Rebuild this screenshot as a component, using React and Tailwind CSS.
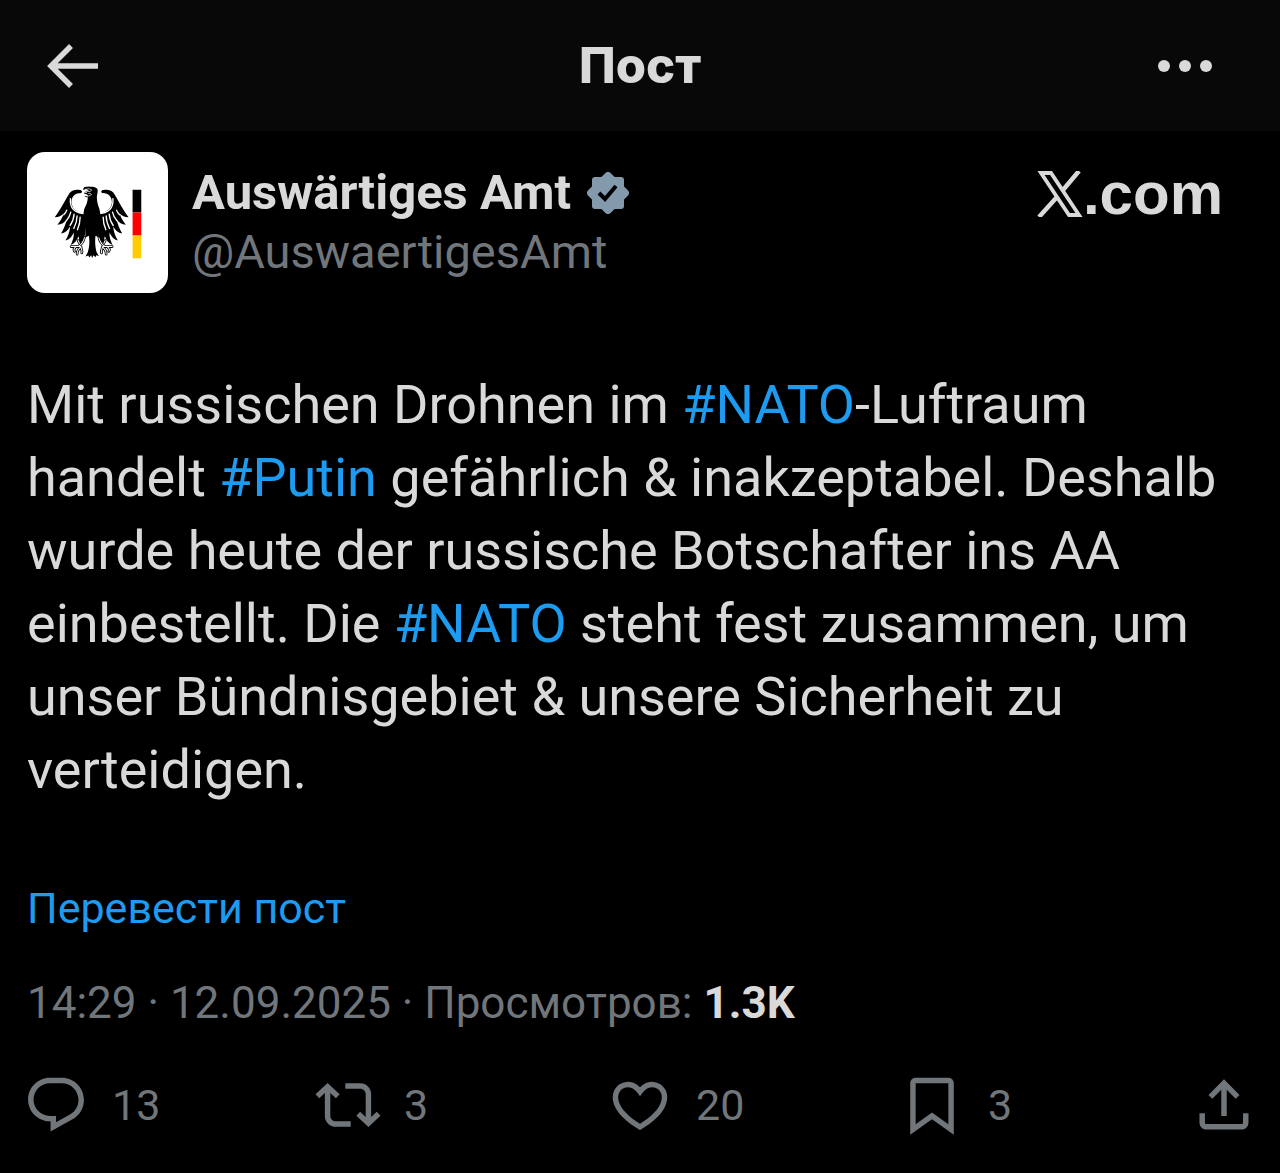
// outlines of the action bar icons, all drawn on a 24 unit grid
const ICONS = {
    reply: 'M1.751 10c0-4.42 3.584-8 8.005-8h4.366c4.49 0 8.129 3.64 8.129 8.13 0 2.96-1.607 5.68-4.196 7.11l-8.054 4.46v-3.69h-.067c-4.49.1-8.183-3.51-8.183-8.01zm8.005-6c-3.317 0-6.005 2.69-6.005 6 0 3.37 2.77 6.08 6.138 6.01l.351-.01h1.761v2.3l5.087-2.81c1.951-1.08 3.163-3.13 3.163-5.36 0-3.39-2.744-6.13-6.129-6.13H9.756z',
    repost: 'M4.5 3.88l4.432 4.14-1.364 1.46L5.5 7.55V16c0 1.1.896 2 2 2H13v2H7.5c-2.209 0-4-1.79-4-4V7.55L1.432 9.48.068 8.02 4.5 3.88zM16.5 6H11V4h5.5c2.209 0 4 1.79 4 4v8.45l2.068-1.93 1.364 1.46-4.432 4.14-4.432-4.14 1.364-1.46 2.068 1.93V8c0-1.1-.896-2-2-2z',
    like: 'M16.697 5.5c-1.222-.06-2.679.51-3.89 2.16l-.805 1.09-.806-1.09C9.984 6.01 8.526 5.44 7.304 5.5c-1.243.07-2.349.78-2.91 1.91-.552 1.12-.633 2.78.479 4.82 1.074 1.97 3.257 4.27 7.129 6.61 3.87-2.34 6.052-4.64 7.126-6.61 1.111-2.04 1.03-3.7.477-4.82-.561-1.13-1.666-1.84-2.908-1.91zm4.187 7.69c-1.351 2.48-4.001 5.12-8.379 7.67l-.503.3-.504-.3c-4.379-2.55-7.029-5.19-8.382-7.67-1.36-2.5-1.41-4.86-.514-6.67.887-1.79 2.647-2.91 4.601-3.01 1.651-.09 3.368.56 4.798 2.01 1.429-1.45 3.146-2.1 4.796-2.01 1.954.1 3.714 1.22 4.601 3.01.896 1.81.846 4.17-.514 6.67z',
    bookmark: 'M4 4C4 2.9 4.9 2 6 2h12c1.1 0 2 .9 2 2v18.94l-8-5.71-8 5.71V4zM6 4v15.06l6-4.29 6 4.29V4H6z',
    share: 'M12 2.59l5.7 5.7-1.41 1.42L13 6.41V16h-2V6.41l-3.3 3.3-1.41-1.42L12 2.59zM21 15l-.02 3.51c0 1.38-1.12 2.49-2.5 2.49H5.5C4.11 21 3 19.88 3 18.5V15h2v3.5c0 .28.22.5.5.5h12.98c.28 0 .5-.22.5-.5L19 15h2z',
};

const ACTIONS = [
    { icon: 'reply', label: 'Ответить', count: '13' },
    { icon: 'repost', label: 'Репост', count: '3' },
    { icon: 'like', label: 'Нравится', count: '20' },
    { icon: 'bookmark', label: 'Закладка', count: '3' },
    { icon: 'share', label: 'Поделиться' },
];

// claw of the eagle, stroked twice to get a white shape with a black outline
const CLAW = 'M193 276c-3 12-9 20-17 26m-23 1h28m-13 0c-6 4-8 9-5 14m20-13c-9 6-12 14-12 22m12-19c2 5 3 10 2 15M178 293l-4-8';

// one half of the eagle: wing, feathers and claw. The other half is mirrored.
function EagleHalf() {
    return (
        <>
            <path d="M180 134c-10-3-24-1-31 8-12 18-24 45-45 73 12 0 20-4 27-11-4 12-10 23-19 34 12-1 21-7 28-17-3 15-9 29-17 43 12-2 21-10 27-21-1 15-6 29-14 42 12-3 20-12 25-24 1 13-3 25-9 37 12-4 19-14 23-26 3 8 2 16 2 24 8-6 15-18 19-32l4-60c-22 2-43-10-46-31-1-14 6-26 18-29 6-1 11 0 13-3s0-6-5-7z" />
            <path d="M151 158c-3 30 12 45 46 47" fill="none" stroke="#fff" strokeWidth="4" />
            <path d="M140 194c-2 6-5 10-9 14M152 200c-2 10-7 19-14 27M162 206c-1 13-5 24-12 34M171 211c0 14-4 26-10 38M180 215c0 14-3 26-8 38" fill="none" stroke="#fff" strokeWidth="4" strokeLinecap="round" />
            <path d={CLAW} fill="none" stroke="#000" strokeWidth="8" strokeLinecap="round" />
            <path d={CLAW} fill="none" stroke="#fff" strokeWidth="3" strokeLinecap="round" />
        </>
    );
}

// Avatar: federal eagle with the flag bar
function Avatar() {
    return (
        <svg viewBox="21 20 422 422" className="size-[141px] shrink-0 rounded-[18px] bg-white" role="img" aria-label="Auswärtiges Amt">
            <EagleHalf />
            <g transform="translate(429 0) scale(-1 1)">
                <EagleHalf />
            </g>
            <path d="M203 158c-1 12-4 20-11 33-4 22-2 42 4 62 1 9 0 17-2 24l12-6c3 15 2 33-3 49l-7 13 9-3 2 6 6-7 3 8 4-8 6 6 2-6 8 2-7-12c-4-15-5-32-3-48l12 6c-3-7-4-15-3-24 7-20 8-41 3-62-5-12-8-24-8-37 2-12 4-20 1-24-6-6-17-7-26-5l-12 1-4 7 9-2 9 5-12 1 6 5-7 3 9 4z" />
            <path d="M195 132l12-2 8 4-5 4-15 1M197 146l13-3 4 5-12 5" fill="none" stroke="#fff" strokeWidth="2" />
            <path d="M190 132l4-6 14-1M192 143l12 2M194 152l9 3" fill="none" stroke="#000" strokeWidth="3" />
            <rect x="337" y="133" width="26" height="68" fill="#000" />
            <rect x="337" y="201" width="26" height="69" fill="#f00" />
            <rect x="337" y="270" width="26" height="68" fill="#fc0" />
        </svg>
    );
}

function VerifiedBadge() {
    return (
        <svg viewBox="0 0 42 42" className="size-[42px] shrink-0" role="img" aria-label="Verified">
            <g fill="#829aab">
                <rect x="5" y="5" width="32" height="32" rx="3" />
                <rect x="5" y="5" width="32" height="32" rx="4" transform="rotate(45 21 21)" />
            </g>
            <path d="M12 21l6 6L29 14" fill="none" stroke="#000" strokeWidth="4" />
        </svg>
    );
}

function XLogo() {
    return (
        <svg viewBox="0 0 46 46" className="size-[46px]" fill="none" stroke="#d9d9d9" aria-hidden="true">
            <path d="M4 2h10l28 42H32z" strokeWidth="3.8" />
            <path d="M42 0L26 19M20 26L2 46" strokeWidth="4.5" />
        </svg>
    );
}

function Tag({ children }) {
    return <a href="#tag" className="text-[#1d9bf0]">{children}</a>;
}

export default function App() {
    return (
        <div className="min-h-screen bg-black font-['Roboto','Liberation_Sans',sans-serif] text-[#d9d9d9]">
            {/* Top bar: back, title, menu */}
            <header className="grid h-[131px] grid-cols-[1fr_auto_1fr] items-center bg-[#080808] px-11">
                <button aria-label="Назад" className="justify-self-start">
                    <svg viewBox="0 0 56 48" className="h-12 w-14" fill="none" stroke="currentColor" strokeWidth="5.5">
                        <path d="M27 4L7 24l20 20M7 24h47" />
                    </svg>
                </button>
                <h1 className="font-['Inter',sans-serif] text-[49px] font-extrabold">Пост</h1>
                <button aria-label="Ещё" className="justify-self-end pr-6">
                    <svg viewBox="0 0 54 12" className="h-3 w-[54px]" fill="currentColor">
                        <circle cx="6" cy="6" r="6" />
                        <circle cx="27" cy="6" r="6" />
                        <circle cx="48" cy="6" r="6" />
                    </svg>
                </button>
            </header>

            <main>
                <article className="px-[27px]">
                    {/* Author row */}
                    <div className="flex items-start pt-[21px]">
                        <Avatar />
                        <div className="ml-6 pt-3">
                            <div className="flex items-center gap-4">
                                <h2 className="text-[49px] leading-[58px] font-bold">Auswärtiges Amt</h2>
                                <VerifiedBadge />
                            </div>
                            <p className="text-[47px] leading-[60px] text-[#71767b]">@AuswaertigesAmt</p>
                        </div>
                        <a href="#x" className="mr-[30px] ml-auto flex items-center pt-3 font-['Liberation_Sans',sans-serif] text-[60px] leading-[60px] font-bold">
                            <XLogo />
                            .com
                        </a>
                    </div>

                    <p className="mt-[75px] text-[54px] leading-[73px]">
                        Mit russischen Drohnen im <Tag>#NATO</Tag>-Luftraum handelt <Tag>#Putin</Tag> gefährlich &amp; inakzeptabel. Deshalb wurde heute der russische Botschafter ins AA einbestellt. Die <Tag>#NATO</Tag> steht fest zusammen, um unser Bündnisgebiet &amp; unsere Sicherheit zu verteidigen.
                    </p>

                    <button className="mt-[72px] block text-[43px] leading-[60px] text-[#1d9bf0]">Перевести пост</button>
                    <p className="mt-[35px] text-[44px] leading-[60px] text-[#71767b]">
                        14:29 · 12.09.2025 · Просмотров: <span className="font-bold text-[#d9d9d9]">1.3K</span>
                    </p>
                </article>

                {/* Action bar */}
                <div className="mt-10 grid grid-cols-[1fr_1fr_1fr_1fr_auto] px-6 pb-9 text-[#71767b]">
                    {ACTIONS.map(({ icon, label, count }) => (
                        <button key={icon} aria-label={label} className="flex items-center gap-6">
                            <svg viewBox="0.25 0.25 23.5 23.5" className="size-16 overflow-visible" fill="currentColor">
                                <path d={ICONS[icon]} />
                            </svg>
                            {count && <span className="text-[43px] leading-[60px]">{count}</span>}
                        </button>
                    ))}
                </div>
            </main>
        </div>
    );
}
